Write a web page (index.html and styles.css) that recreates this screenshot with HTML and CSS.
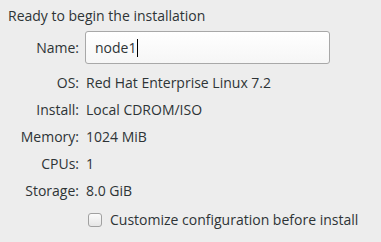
FILE: index.html
```html
<!DOCTYPE html>
<html>
<head>
<meta charset="utf-8">
<link rel="stylesheet" href="styles.css">
</head>
<body>
<div class="page">
  <div class="title">Ready to begin the installation</div>
  <div class="form">
    <div class="label name-label">Name:</div>
    <div class="entry"><span class="entry-text">node1</span><span class="cursor"></span></div>
    <div class="label">OS:</div>
    <div class="value">Red Hat Enterprise Linux 7.2</div>
    <div class="label">Install:</div>
    <div class="value">Local CDROM/ISO</div>
    <div class="label">Memory:</div>
    <div class="value">1024 MiB</div>
    <div class="label">CPUs:</div>
    <div class="value">1</div>
    <div class="label">Storage:</div>
    <div class="value">8.0 GiB</div>
    <div class="spacer"></div>
    <label class="check"><span class="box"></span><span class="check-text">Customize configuration before install</span></label>
  </div>
</div>
</body>
</html>
```
FILE: styles.css
```css
html, body {
  margin: 0;
  padding: 0;
  background: #ededed;
}
body {
  width: 381px;
  height: 242px;
  overflow: hidden;
  font-family: "Open Sans", "DejaVu Sans", sans-serif;
  font-size: 14px;
  color: #2e3436;
}
.page {
  padding: 6px 0 0 8px;
}
.title {
  line-height: 20px;
}
.form {
  display: grid;
  grid-template-columns: 71px 244px;
  column-gap: 7px;
  margin-top: 5px;
  align-items: center;
}
.label {
  text-align: right;
  line-height: 27px;
}
.value {
  line-height: 27px;
  white-space: nowrap;
}
.entry {
  height: 33px;
  box-sizing: border-box;
  border: 1px solid #a8a8a8;
  border-radius: 3px;
  background: linear-gradient(#ffffff, #f6f6f6);
  display: flex;
  align-items: center;
  padding-left: 9px;
  margin-left: -1px;
  margin-bottom: 5px;
}
.name-label {
  margin-bottom: 5px;
}
.cursor {
  display: inline-block;
  width: 1px;
  height: 18px;
  background: #000;
  margin-left: 1px;
}
.check {
  display: flex;
  align-items: center;
  gap: 8px;
  line-height: 27px;
  margin-left: 2px;
  margin-top: 2px;
  white-space: nowrap;
}
.box {
  flex: none;
  width: 14px;
  height: 14px;
  box-sizing: border-box;
  border: 1px solid #a0a0a0;
  border-radius: 3px;
  background: linear-gradient(#fbfbfb, #e6e6e6);
}
```
